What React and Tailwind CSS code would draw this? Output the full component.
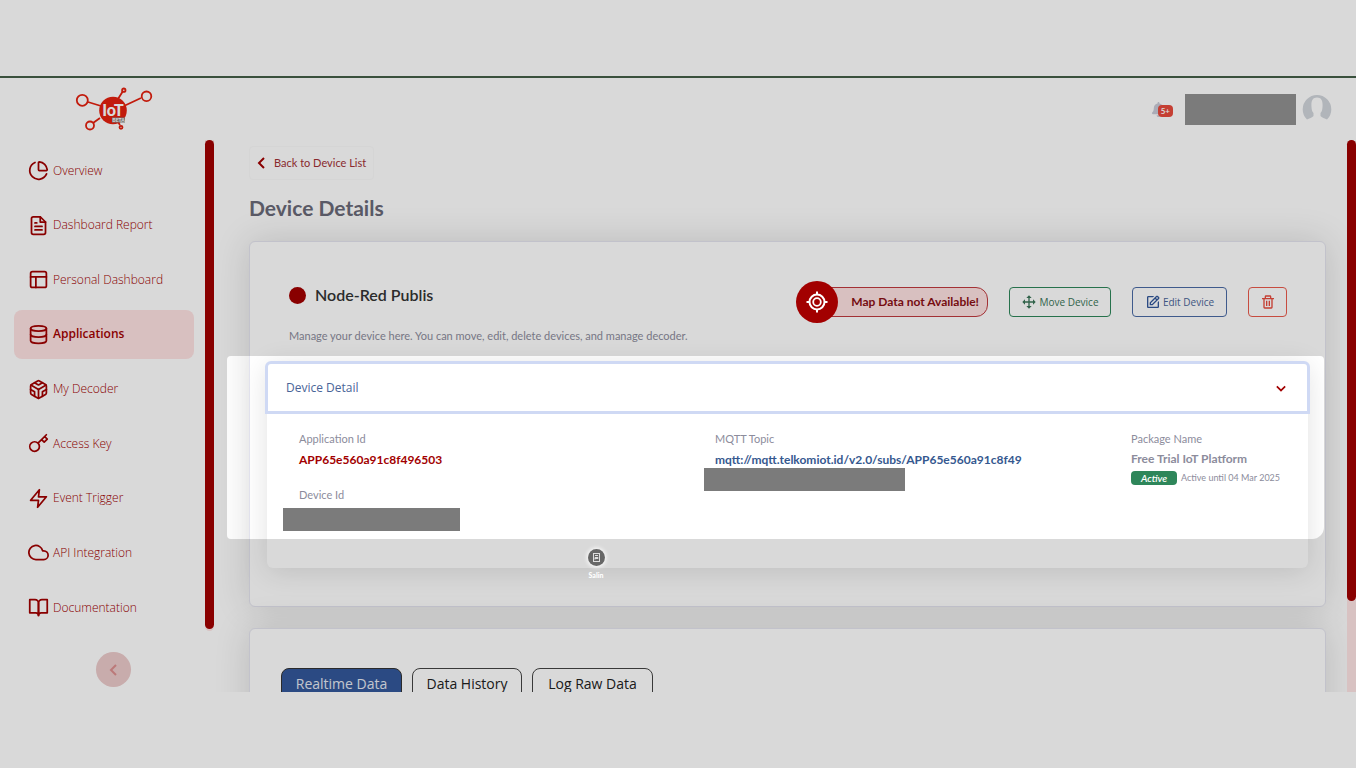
import React from "react";
import {
  FiFileText, FiLayout, FiDatabase, FiCodesandbox, FiKey, FiZap, FiCloud, FiBookOpen,
} from "react-icons/fi";
import { ChartPie } from "lucide-react";
import { BiMove, BiEdit, BiTrash, BiChevronLeft, BiChevronDown } from "react-icons/bi";
import { FaBell } from "react-icons/fa";

const NAV = [
  { label: "Overview", Icon: ChartPie },
  { label: "Dashboard Report", Icon: FiFileText },
  { label: "Personal Dashboard", Icon: FiLayout },
  { label: "Applications", Icon: FiDatabase, active: true },
  { label: "My Decoder", Icon: FiCodesandbox },
  { label: "Access Key", Icon: FiKey },
  { label: "Event Trigger", Icon: FiZap },
  { label: "API Integration", Icon: FiCloud },
  { label: "Documentation", Icon: FiBookOpen },
];

function Logo() {
  return (
    <svg width="78" height="44" viewBox="0 0 78 44" role="img" aria-label="IoT Beta">
      <g fill="none" stroke="#e4200f" strokeWidth="1.8">
        <path d="M13 15 26 19M50 18.500 66 11M43 12 48 4M25 31 18 36M41 32 45 38" />
        <circle cx="7.300" cy="13.300" r="5.500" />
        <circle cx="71.500" cy="9.300" r="4.800" />
        <circle cx="15" cy="38.500" r="4" />
        <circle cx="48.800" cy="3.200" r="1.700" />
        <circle cx="46" cy="40.300" r="1.500" />
      </g>
      <circle cx="38" cy="23.500" r="13.800" fill="#e4200f" />
      <text x="38" y="29" textAnchor="middle" fontSize="16" fontWeight="900" fill="#fff" fontFamily="Lato, sans-serif">IoT</text>
      <rect x="37" y="30.500" width="13" height="5" fill="#858585" />
      <text x="43.500" y="35" textAnchor="middle" fontSize="5" fontWeight="700" fill="#fff" fontFamily="Lato, sans-serif">BETA</text>
    </svg>
  );
}

function Avatar() {
  return (
    <svg width="30" height="28" viewBox="0 0 30 28" role="img" aria-label="Profile" className="mb-0.5">
      <path
        fill="#d1d5db"
        d="M5 25.500A14.300 14.300 0 1 1 25 25.500C23 24.500 19.500 23.500 18.500 22V19C20 17.500 20.300 15.500 20.500 13C21 7 19.500 3.500 15 3.500S9 7 9.500 13C9.700 15.500 10 17.500 11.500 19V22C10.500 23.500 7 24.500 5 25.500Z"
      />
    </svg>
  );
}

function Crosshair() {
  return (
    <svg width="22" height="22" viewBox="0 0 22 22" fill="none" stroke="currentColor" strokeWidth="2" aria-hidden="true">
      <circle cx="11" cy="11" r="7.500" />
      <circle cx="11" cy="11" r="3.800" strokeWidth="1.800" />
      <path d="M11 .5v3M11 18.500v3M.5 11h3M18.500 11h3" />
    </svg>
  );
}

function Sidebar() {
  return (
    <aside className="flex w-[214px] shrink-0 flex-col">
      <div className="flex justify-between">
        <nav className="mt-1.5 ml-3.5 flex h-[486px] w-[180px] flex-col justify-between">
          {NAV.map(({ label, Icon, active }) => (
            <a
              key={label}
              href="#"
              className={
                active
                  ? "flex h-[49px] items-center gap-1 rounded-lg bg-[#fee2e2] pl-3.5 text-xs font-semibold text-[#a20000]"
                  : "flex h-[49px] items-center gap-1 rounded-lg pl-3.5 text-xs font-light text-[#a20000]"
              }
            >
              <Icon className="size-[21px]" />
              {label}
            </a>
          ))}
        </nav>
        <div className="w-[9px] self-start rounded-b-full bg-[#fee4e4] pb-0.5">
          <div className="h-[489px] rounded-full bg-[#a20000]" />
        </div>
      </div>
      <button aria-label="Collapse menu" className="mt-5 ml-24 flex size-[35px] items-center justify-center rounded-full bg-[#eccaca] text-[#dc8f8f]">
        <BiChevronLeft className="size-6" />
      </button>
    </aside>
  );
}

function Field({ label, children }) {
  return (
    <div>
      <dt className="text-[11px] leading-4 text-[#8c8c9c]">{label}</dt>
      <dd className="mt-[3px]">{children}</dd>
    </div>
  );
}

function DeviceDetail() {
  return (
    <section className="mx-[17px] rounded-md bg-white shadow-[0_4px_28px_rgba(0,0,0,0.12)]">
      <button className="-mx-0.5 flex h-[53px] w-[calc(100%+4px)] items-center justify-between rounded-t-md border-3 border-[#cfd9f4] bg-white pr-4 pl-[18px] font-['Open_Sans',sans-serif] text-xs text-[#4a6598]">
        Device Detail
        <BiChevronDown className="size-5 text-[#a20000]" />
      </button>
      <dl className="grid h-[154px] grid-cols-[416fr_416fr_160fr] pt-[17px] pr-[17px] pl-8">
        <div className="flex flex-col gap-[17px]">
          <Field label="Application Id">
            <span className="block text-xs leading-5 font-bold text-[#a20000]">APP65e560a91c8f496503</span>
          </Field>
          <div className="relative">
            <Field label="Device Id">
              <span className="absolute -left-4 mt-0.5 block h-[23px] w-[177px] bg-[#7b7b7b]" />
            </Field>
          </div>
        </div>
        <div className="relative">
          <Field label="MQTT Topic">
            <span className="block text-xs leading-5 font-bold text-[#35588f]">mqtt://mqtt.telkomiot.id/v2.0/subs/APP65e560a91c8f49</span>
            <span className="absolute top-[37px] -left-[11px] block h-[23px] w-[201px] bg-[#7b7b7b]" />
          </Field>
        </div>
        <Field label="Package Name">
          <span className="block text-xs leading-[18px] font-bold whitespace-nowrap text-[#8c8c9c]">Free Trial IoT Platform</span>
          <span className="mt-[3px] flex items-center gap-1 text-[9px] leading-3.5 whitespace-nowrap text-[#8c8c9c]">
            <span className="w-[46px] rounded bg-[#2e865a] text-center text-[10px] font-semibold text-white italic">Active</span>
            Active until 04 Mar 2025
          </span>
        </Field>
      </dl>
    </section>
  );
}

function Tabs() {
  return (
    <div role="tablist" className="flex gap-2.5 font-['Open_Sans',sans-serif] text-sm text-[#222]">
      <button role="tab" aria-selected="true" className="h-8 w-[121px] rounded-lg border border-[#333] bg-[#33589a] text-[#e5e9f2]">Realtime Data</button>
      <button role="tab" aria-selected="false" className="h-8 w-[110px] rounded-lg border border-[#444]">Data History</button>
      <button role="tab" aria-selected="false" className="h-8 w-[121px] rounded-lg border border-[#444]">Log Raw Data</button>
    </div>
  );
}

export default function App() {
  return (
    <div className="relative flex h-screen flex-col overflow-hidden bg-white font-[Lato,sans-serif]">
      <div className="h-[78px] shrink-0 border-b-2 border-[#456048]" />
      <div className="flex min-h-0 flex-1 flex-col overflow-hidden">
        <header className="flex h-[62px] shrink-0 items-center justify-between pr-6 pl-[75px]">
          <Logo />
          <div className="flex items-center gap-1.5">
            <button aria-label="Notifications" className="relative mr-1.5 h-5 w-[22px]">
              <FaBell className="size-[15px] text-[#c9cbd8]" />
              <span className="absolute top-1.5 right-0 rounded-sm bg-[#e84a3c] px-[3px] text-[8px] leading-3 font-bold text-white">5+</span>
            </button>
            <span className="h-[31px] w-[111px] bg-[#919191]" />
            <Avatar />
          </div>
        </header>

        <div className="flex min-h-0 flex-1 font-['Open_Sans',sans-serif]">
          <Sidebar />
          <main className="flex min-w-0 flex-1 flex-col overflow-hidden pt-1.5 pr-[21px] pl-[35px] font-[Lato,sans-serif]">
            <a href="#" className="flex h-[34px] w-[125px] shrink-0 items-center self-start rounded border border-[#fbfbfb] text-[11px] whitespace-nowrap text-[#a23035]">
              <BiChevronLeft className="size-6 text-[#a20000]" />
              Back to Device List
            </a>
            <h1 className="mt-3 text-[21px] leading-8 font-bold text-[#6a6a78]">Device Details</h1>

            <section className="mt-[17px] shrink-0 rounded-md border border-[#e4e4ef] bg-white pb-[38px] shadow-[0_0_36px_rgba(0,0,0,0.14)]">
              <div className="flex justify-between pt-[39px] pr-[38px] pl-[39px]">
                <div className="pt-0.5">
                  <h2 className="flex items-center gap-[9px] text-base leading-6 font-semibold text-[#333]">
                    <span className="size-[17px] rounded-full bg-[#a20000]" />
                    Node-Red Publis
                  </h2>
                  <p className="mt-[21px] text-[11px] leading-4 text-[#8c8c9c]">
                    Manage your device here. You can move, edit, delete devices, and manage decoder.
                  </p>
                </div>
                <div className="flex h-[42px] items-center gap-[21px] font-['Open_Sans',sans-serif] text-[10px]">
                  <div className="flex items-center font-[Lato,sans-serif]">
                    <span className="z-1 flex size-[42px] items-center justify-center rounded-full bg-[#a20000] text-white">
                      <Crosshair />
                    </span>
                    <span className="-ml-5 h-[30px] rounded-r-xl border border-[#c03a3f] bg-[#fee2e2] pr-2 pl-8 text-xs leading-7 font-bold text-[#8b0f14]">
                      Map Data not Available!
                    </span>
                  </div>
                  <button className="flex h-[30px] w-[102px] items-center justify-center gap-0.5 rounded border border-[#2e865a] text-[#3a7558]">
                    <BiMove className="size-4" />
                    Move Device
                  </button>
                  <button className="flex h-[30px] w-[95px] items-center justify-center gap-0.5 rounded border border-[#4a6aa5] text-[#4a6598]">
                    <BiEdit className="size-4 text-[#33589a]" />
                    Edit Device
                  </button>
                  <button aria-label="Delete device" className="flex h-[30px] w-[39px] items-center justify-center rounded border border-[#ea5a4c] text-[#e84a3c]">
                    <BiTrash className="size-4" />
                  </button>
                </div>
              </div>
              <div className="mt-[17px]">
                <DeviceDetail />
              </div>
            </section>

            <section className="mt-[21px] shrink-0 rounded-md border border-[#e4e4ef] bg-white px-[31px] pt-[39px] pb-20 shadow-[0_0_36px_rgba(0,0,0,0.14)]">
              <Tabs />
            </section>
          </main>
          <div className="w-[9px] rounded-t-full bg-[#fee4e4]">
            <div className="h-[461px] rounded-full bg-[#a20000]" />
          </div>
        </div>
      </div>
      <div className="h-[76px] shrink-0" />

      <div className="pointer-events-none absolute top-[356px] right-8 left-[227px] h-[183px] rounded-sm rounded-br-xl shadow-[0_0_0_2000px_rgba(0,0,0,0.15)]" />
      <button className="absolute top-[549px] left-[586px] flex w-5 flex-col items-center gap-1 text-[7px] leading-[10px] font-black text-white">
        <span className="flex size-[17px] items-center justify-center rounded-full bg-[#666] shadow-[0_0_4px_1px_#fff]">
          <svg width="9" height="9" viewBox="0 0 9 9" fill="none" stroke="#ddd" strokeWidth="1">
            <rect x="1.500" y="0.500" width="6" height="8" />
            <path d="M3 2.500h3M3 6.500V4.500h3v1H3" />
          </svg>
        </span>
        Salin
      </button>
    </div>
  );
}
